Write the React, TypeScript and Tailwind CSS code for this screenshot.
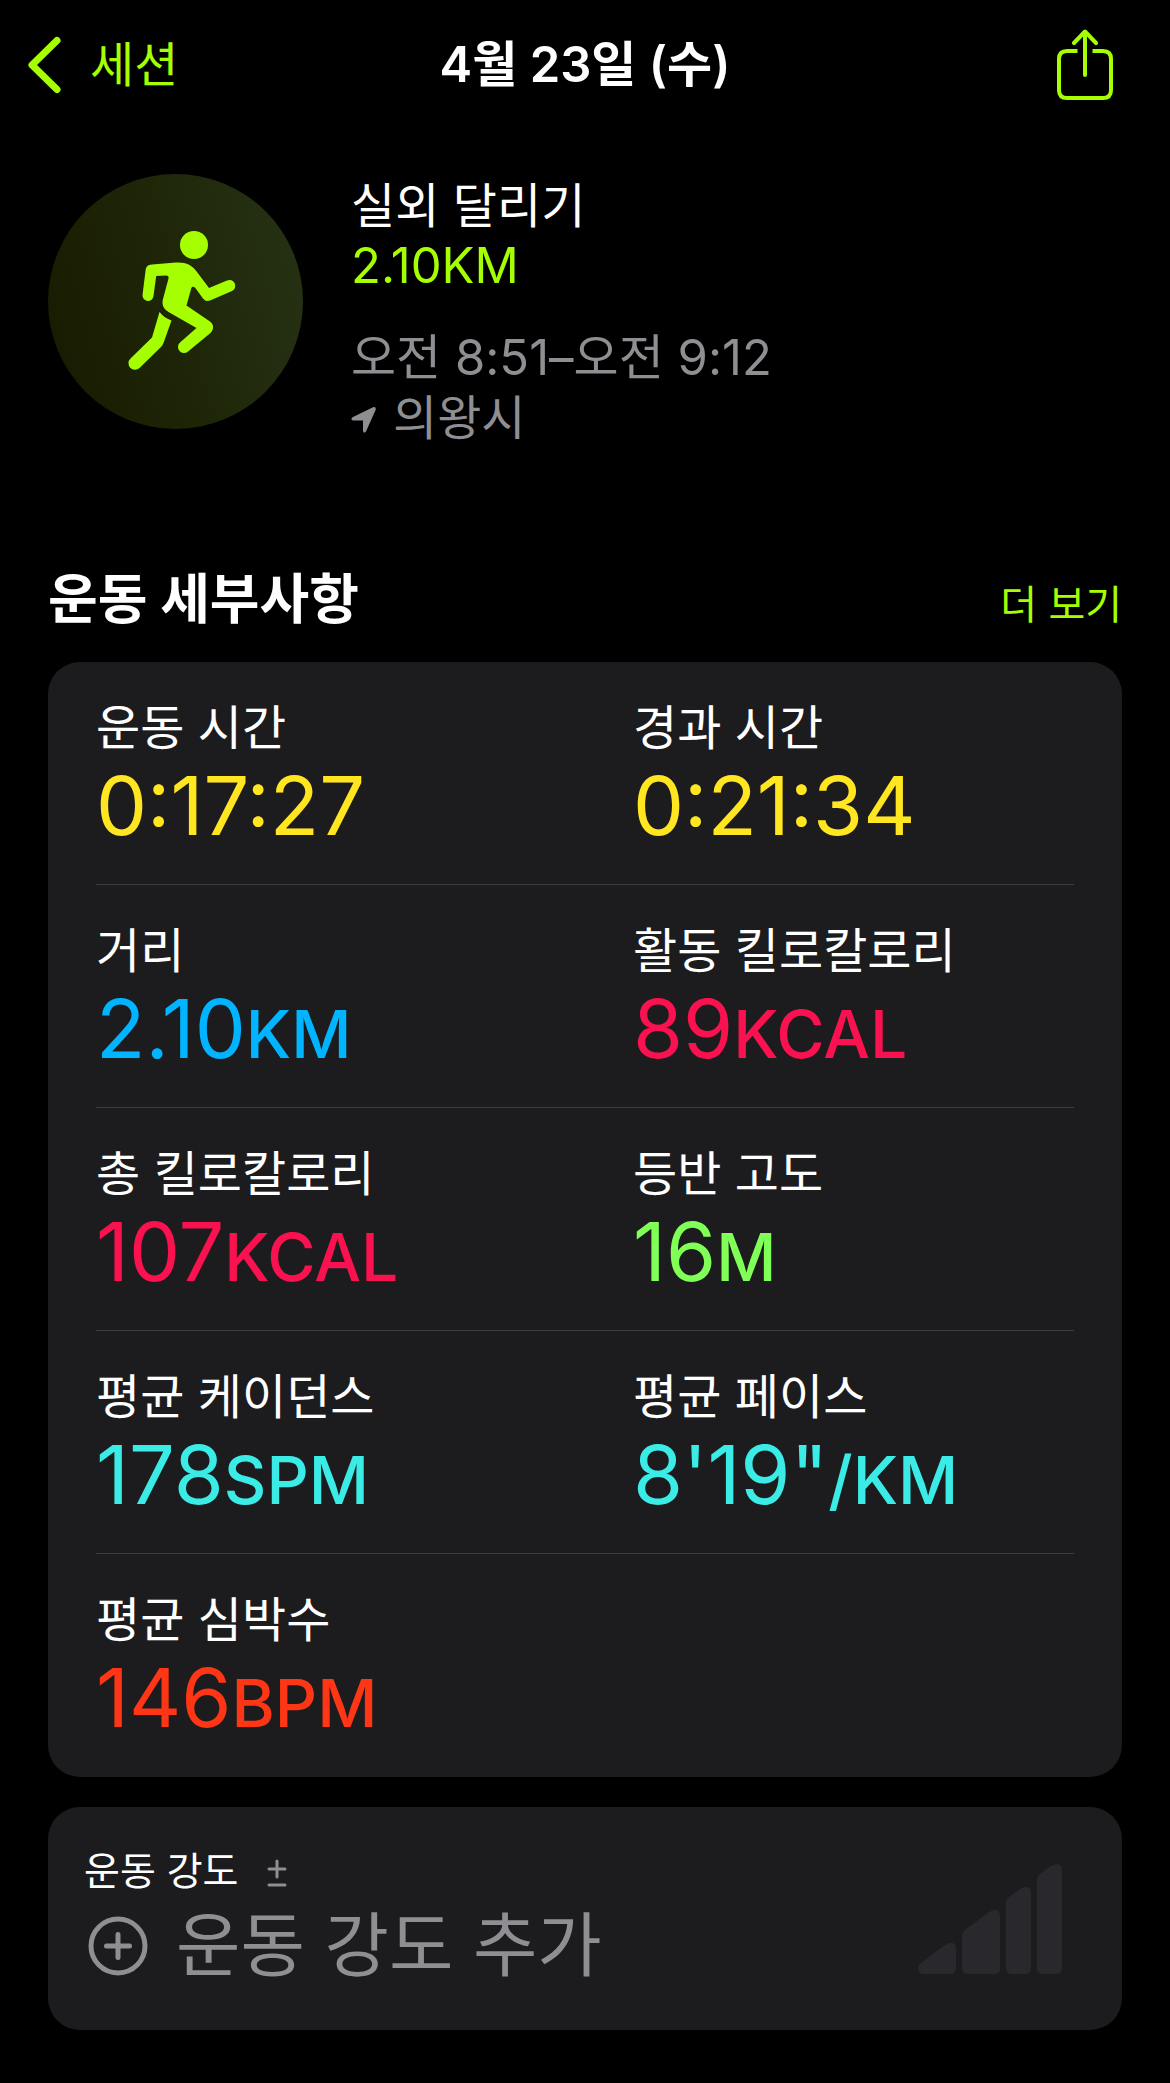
import React from "react";

type Metric = {
  label: string;
  value: string;
  unit?: string;
  color: string;
};

const metrics: Metric[] = [
  { label: "운동 시간", value: "0:17:27", color: "text-[#ffe620]" },
  { label: "경과 시간", value: "0:21:34", color: "text-[#ffe620]" },
  { label: "거리", value: "2.10", unit: "KM", color: "text-[#00b4ff]" },
  { label: "활동 킬로칼로리", value: "89", unit: "KCAL", color: "text-[#fa114f]" },
  { label: "총 킬로칼로리", value: "107", unit: "KCAL", color: "text-[#fa114f]" },
  { label: "등반 고도", value: "16", unit: "M", color: "text-[#80ff56]" },
  { label: "평균 케이던스", value: "178", unit: "SPM", color: "text-[#3aebe6]" },
  { label: "평균 페이스", value: "8'19\"", unit: "/KM", color: "text-[#3aebe6]" },
  { label: "평균 심박수", value: "146", unit: "BPM", color: "text-[#ff3616]" },
];

const rows = [0, 2, 4, 6, 8].map((i) => metrics.slice(i, i + 2));

const RunnerIcon = () => (
  <svg viewBox="0 0 255 255" className="size-full" fill="#a6ff00" aria-hidden="true">
    <circle cx="146" cy="71" r="14" />
    <path d="M104 90.500L128 88.500C138 88 144 91 149 98L161 114L179 106.500A5.700 5.700 0 0 1 184 117L162 126.500C159 127.500 157 127 155 124.500L147 113.500C145.500 112 143.700 112.500 143.200 114.500L138.500 131.500L162 147.500C166 150.500 166 155.500 162.500 159L140 177.500A5.900 5.900 0 0 1 132 168.500L148.500 154L120.500 138C115.500 135 113.500 130.500 115 125L120.500 104.500C121 102.500 120 101.500 118 101.500L108.200 102L105.500 122A5.500 5.500 0 0 1 94.500 121L97.500 97C98 92.500 99.500 91 104 90.500Z" />
    <path d="M111.500 138C114.500 142 119 145 123.500 146.500L115.500 169Q114.500 171.500 113 173L91.500 194A6 6 0 0 1 82.500 184.500L104 163.500Z" />
  </svg>
);

const MetricCell = ({ label, value, unit, color }: Metric) => (
  <div>
    <dt className="text-[48px] leading-[60px]">{label}</dt>
    <dd className={`whitespace-nowrap text-[81px] leading-[96px] ${color}`}>
      {value}
      {unit && <span className="text-[66px] leading-none font-medium">{unit}</span>}
    </dd>
  </div>
);

const App = () => {
  return (
    <div className="min-h-screen bg-black pb-[53px] font-['Inter','Noto_Sans_CJK_KR',sans-serif] text-white">
      <header className="grid grid-cols-[1fr_auto_1fr] items-center px-7 pt-[29px]">
        <a href="#sessions" className="flex items-center gap-7 text-[#a6ff00]">
          <svg viewBox="0 0 34 58" className="h-[58px] w-[34px]" fill="none" stroke="currentColor" strokeWidth="7" strokeLinecap="round" strokeLinejoin="round" aria-hidden="true">
            <path d="M29 4.500L4 29L29 53.500" />
          </svg>
          <span className="text-[48px] leading-[72px]">세션</span>
        </a>
        <h1 className="text-[49px] leading-[72px] font-semibold">4월 23일 (수)</h1>
        <button type="button" aria-label="공유" className="mr-7 justify-self-end text-[#a6ff00]">
          <svg viewBox="0 0 58 72" className="h-[72px] w-[58px]" fill="none" stroke="currentColor" strokeWidth="4" strokeLinecap="round" strokeLinejoin="round" aria-hidden="true">
            <path strokeLinecap="butt" d="M21.500 22H11Q3 22 3 30V61Q3 69 11 69H47Q55 69 55 61V30Q55 22 47 22H36.500" />
            <path d="M29 46V3M18 14L29 2.500L40 14" />
          </svg>
        </button>
      </header>

      <main className="px-12">
        <section className="flex gap-12 pt-[73px]">
          <div className="size-[255px] shrink-0 rounded-full bg-linear-75 from-[#171a00] to-[#273315]">
            <RunnerIcon />
          </div>
          <div className="pt-0.5 text-[48px] leading-[60px]">
            <p>실외 달리기</p>
            <p className="text-[49px] text-[#a6ff00]">2.10KM</p>
            <p className="mt-8 text-[49px] text-[#8e8e93]">오전 8:51–오전 9:12</p>
            <p className="flex items-center gap-4 text-[#8e8e93]">
              <svg viewBox="0 0 26 28" className="mt-1 h-7 w-[26px]" fill="currentColor" aria-hidden="true">
                <path d="M22 1.300Q25.500 .3 24.600 4L15 25.500Q13 28 12 25V14.500H2Q-1 13.500 1.500 11.300Z" />
              </svg>
              의왕시
            </p>
          </div>
        </section>

        <section className="pt-[114px]">
          <div className="flex items-baseline justify-between">
            <h2 className="text-[54px] leading-[76px] font-bold">운동 세부사항</h2>
            <a href="#details" className="text-[40px] text-[#a6ff00]">더 보기</a>
          </div>
          <dl className="mt-6 rounded-[32px] bg-[#1c1c1e] px-12">
            {rows.map((row) => (
              <div key={row[0].label} className="grid h-[223px] grid-cols-2 gap-24 border-b border-[#3d3d40] pt-9 last:border-b-0">
                {row.map((m) => (
                  <MetricCell key={m.label} {...m} />
                ))}
              </div>
            ))}
          </dl>
        </section>

        <section className="mt-[30px] flex items-center justify-between rounded-[32px] bg-[#1c1c1e] pr-[60px] pl-9">
          <div className="pt-8 pb-[42px]">
            <h3 className="flex items-center gap-7 text-[39px] leading-[64px]">
              운동 강도
              <svg viewBox="0 0 20 28" className="mt-1 h-7 w-5" stroke="#8e8e93" strokeWidth="3" strokeLinecap="round" aria-hidden="true">
                <path d="M10 2V18M2 10H18M2 26H18" />
              </svg>
            </h3>
            <button type="button" className="flex items-center gap-7 pl-1 text-[70px] leading-[85px] text-[#8e8e93]">
              <svg viewBox="0 0 60 60" className="size-[60px]" fill="none" stroke="currentColor" strokeWidth="5" strokeLinecap="round" aria-hidden="true">
                <circle cx="30" cy="30" r="27" />
                <path d="M30 18.500V41.500M18.500 30H41.500" />
              </svg>
              운동 강도 추가
            </button>
          </div>
          <svg viewBox="0 0 144 112" className="h-28 w-36" fill="#29282d" aria-hidden="true">
            <path d="M3 100L27 82Q38 76 38 86V105Q38 111 32 111H6Q0 111 0 105Q0 102 3 100Z" />
            <path d="M47 67L71 49Q82 43 82 54V105Q82 111 76 111H50Q44 111 44 105V73Q44 69 47 67Z" />
            <path d="M91 34L102 26Q113 20 113 31V105Q113 111 107 111H94Q88 111 88 105V40Q88 36 91 34Z" />
            <path d="M122 11L133 3Q144 -3 144 8V105Q144 111 138 111H125Q119 111 119 105V17Q119 13 122 11Z" />
          </svg>
        </section>
      </main>
    </div>
  );
};

export default App;
